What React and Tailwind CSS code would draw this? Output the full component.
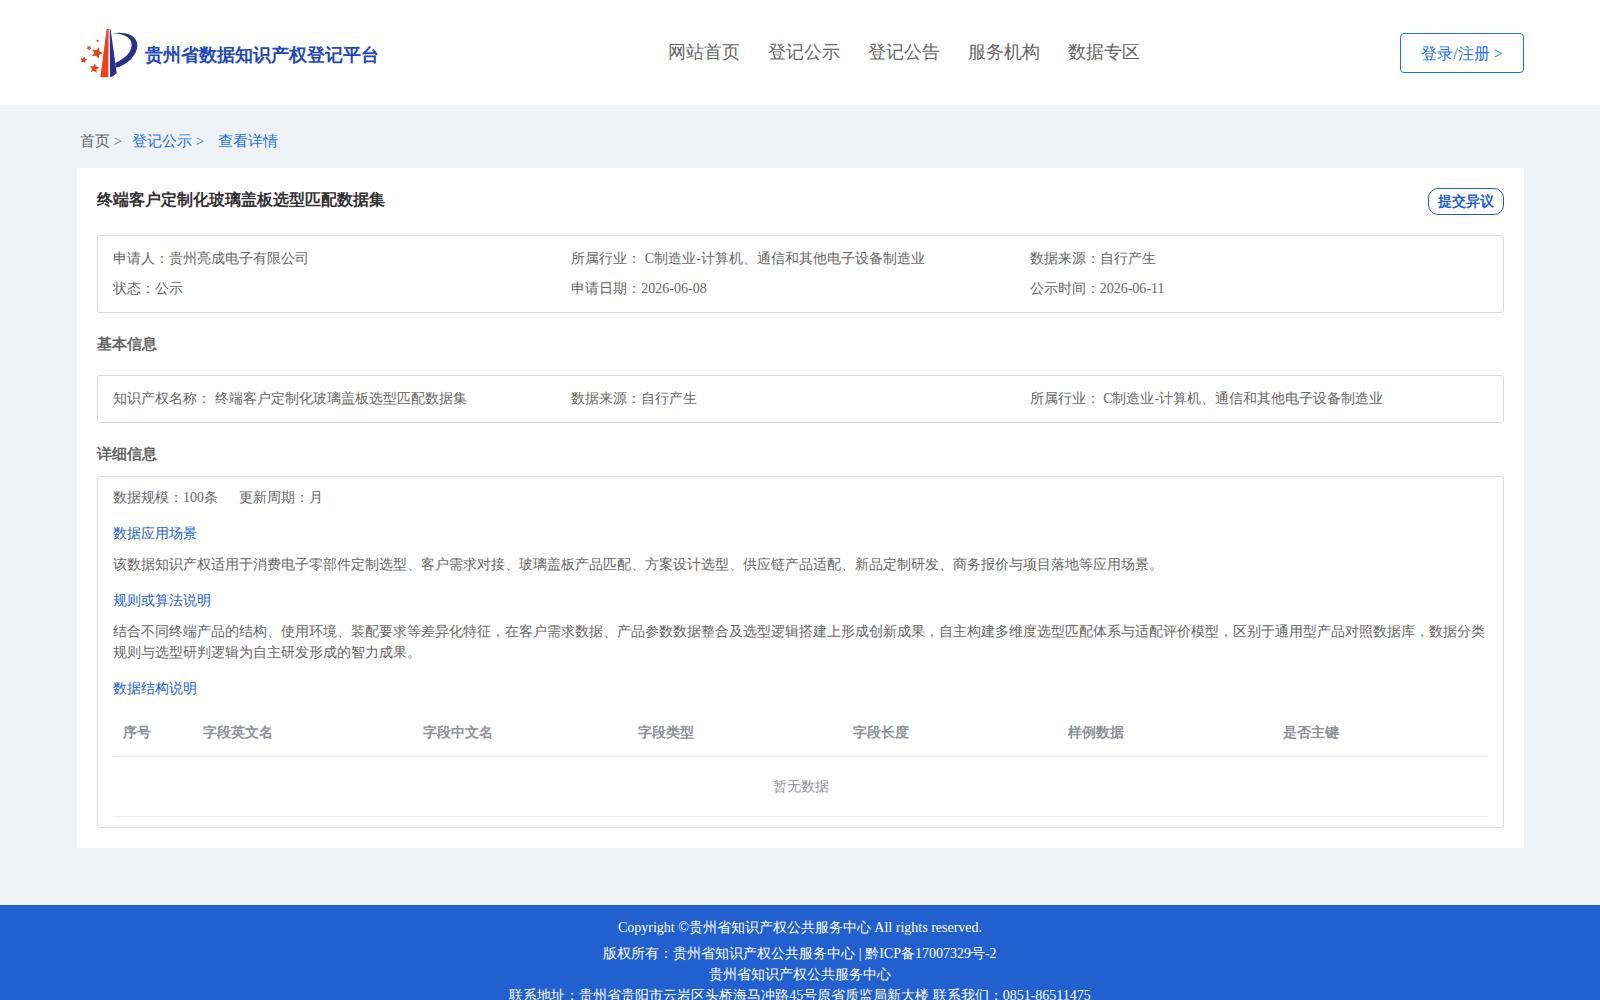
const navItems = [
  { label: "网站首页", href: "#home" },
  { label: "登记公示", href: "#publicity" },
  { label: "登记公告", href: "#notice" },
  { label: "服务机构", href: "#service" },
  { label: "数据专区", href: "#data" }
];

const summary = [
  "申请人：贵州亮成电子有限公司",
  "所属行业： C制造业-计算机、通信和其他电子设备制造业",
  "数据来源：自行产生",
  "状态：公示",
  "申请日期：2026-06-08",
  "公示时间：2026-06-11"
];

const basicInfo = [
  "知识产权名称： 终端客户定制化玻璃盖板选型匹配数据集",
  "数据来源：自行产生",
  "所属行业： C制造业-计算机、通信和其他电子设备制造业"
];

const columns = ["序号", "字段英文名", "字段中文名", "字段类型", "字段长度", "样例数据", "是否主键"];

const stars = [
  { x: 71, y: 149, r: 11, turn: 10 },
  { x: 103, y: 174, r: 15, turn: 8 },
  { x: 111, y: 128, r: 18, turn: 20 },
  { x: 87, y: 113, r: 8, turn: 30 },
  { x: 113, y: 92, r: 5, turn: 0 }
];

const starPoints = ({ x, y, r, turn }) =>
  Array.from({ length: 10 }, (_, i) => {
    const radius = i % 2 ? r * 0.48 : r;
    const angle = ((i * 36 - 90 + turn) * Math.PI) / 180;
    return `${x + radius * Math.cos(angle)},${y + radius * Math.sin(angle)}`;
  }).join(" ");

const Logo = () => (
  <svg viewBox="60 50 180 156" className="h-[52px] w-[60px]" aria-hidden="true">
    <path d="M140 56 L146 56 L145 201 L121 201 Z" fill="#e6461b" />
    <path d="M149 56 L152 58 L170 189 Q161 198 150 201 Z" fill="#2a318c" />
    <path
      d="M156 69 C196 62 230 74 232 103 C233 136 198 166 167 172 L166 158 C190 146 214 130 215 104 C215 80 190 70 156 69 Z"
      fill="#2a318c"
    />
    {stars.map((star) => (
      <polygon key={star.y} points={starPoints(star)} fill="#e6461b" />
    ))}
  </svg>
);

const Header = () => (
  <header className="bg-white">
    <div className="flex h-[105px] items-center justify-between pr-[76px] pl-[77px]">
      <a href="#home" className="flex w-[331px] items-center gap-[5px] pl-[3px]">
        <Logo />
        <span className="pt-1 text-[18px] leading-6 font-bold whitespace-nowrap text-[#2448b8]">
          贵州省数据知识产权登记平台
        </span>
      </a>
      <nav className="flex gap-7 pb-[2px] text-[18px] leading-6 whitespace-nowrap text-[#666]">
        {navItems.map((item) => (
          <a key={item.href} href={item.href}>
            {item.label}
          </a>
        ))}
      </nav>
      <button
        type="button"
        className="h-10 w-[124px] rounded border border-[#1a6ff0] pt-[2px] text-[16px] leading-6 whitespace-nowrap text-[#1a6ff0]"
      >
        登录/注册 &gt;
      </button>
    </div>
  </header>
);

const Breadcrumb = () => (
  <nav className="flex h-[63px] items-center pt-[10px] pl-[3px] text-[15px] leading-[21px] text-[#1a6ff0]">
    <a href="#home" className="mr-[10px] text-[#666]">
      首页 &gt;
    </a>
    <a href="#publicity" className="mr-[14px]">
      登记公示 &gt;
    </a>
    <span>查看详情</span>
  </nav>
);

const InfoGrid = ({ items }) => (
  <ul className="grid grid-cols-3 gap-y-[9px] rounded-[3px] border border-[#dcdcdc] px-[15px] pt-3 pb-[13px]">
    {items.map((item) => (
      <li key={item}>{item}</li>
    ))}
  </ul>
);

const SectionTitle = ({ children }) => (
  <h2 className="text-[15px] leading-[21px] font-bold">{children}</h2>
);

const DetailTitle = ({ children }) => <h3 className="mt-[15px] text-[#2260d0]">{children}</h3>;

const FieldTable = () => (
  <table className="mt-[10px] w-full table-fixed text-left text-[#909399]">
    <colgroup>
      <col className="w-20" />
      <col className="w-[220px]" />
      <col span={5} />
    </colgroup>
    <thead>
      <tr className="h-[47px] border-b border-[#ebeef5]">
        {columns.map((column) => (
          <th key={column} scope="col" className="px-[10px] font-bold">
            {column}
          </th>
        ))}
      </tr>
    </thead>
    <tbody>
      <tr className="h-[60px] border-b border-[#ebeef5]">
        <td colSpan={7} className="text-center">
          暂无数据
        </td>
      </tr>
    </tbody>
  </table>
);

const Footer = () => (
  <footer className="mt-[57px] bg-[#2260d0] px-4 pt-3 pb-5 text-center text-[14px] leading-[21px] text-white">
    <p className="mb-[5px]">Copyright ©贵州省知识产权公共服务中心 All rights reserved.</p>
    <p>版权所有：贵州省知识产权公共服务中心 | 黔ICP备17007329号-2</p>
    <p>贵州省知识产权公共服务中心</p>
    <p>联系地址：贵州省贵阳市云岩区头桥海马冲路45号原省质监局新大楼 联系我们：0851-86511475</p>
  </footer>
);

const App = () => (
  <div className="min-h-screen bg-[#eff3f6] font-['Liberation_Serif',serif]">
    <Header />
    <div className="pr-[76px] pl-[77px]">
      <Breadcrumb />
      <main className="bg-white p-5 text-[14px] leading-[21px] text-[#666]">
        <div className="mb-5 flex items-start justify-between">
          <h1 className="text-[16px] leading-6 font-bold text-[#333]">终端客户定制化玻璃盖板选型匹配数据集</h1>
          <button
            type="button"
            className="h-[27px] w-[76px] rounded-[10px] border border-[#2260d0] font-bold text-[#2260d0]"
          >
            提交异议
          </button>
        </div>
        <InfoGrid items={summary} />
        <div className="mt-[21px] mb-5">
          <SectionTitle>基本信息</SectionTitle>
        </div>
        <InfoGrid items={basicInfo} />
        <div className="mt-[21px] mb-[11px]">
          <SectionTitle>详细信息</SectionTitle>
        </div>
        <section className="rounded-[3px] border border-[#dcdcdc] px-[15px] py-[10px]">
          <p className="flex gap-[21px]">
            <span>数据规模：100条</span>
            <span>更新周期：月</span>
          </p>
          <DetailTitle>数据应用场景</DetailTitle>
          <p className="mt-[10px]">
            该数据知识产权适用于消费电子零部件定制选型、客户需求对接、玻璃盖板产品匹配、方案设计选型、供应链产品适配、新品定制研发、商务报价与项目落地等应用场景。
          </p>
          <DetailTitle>规则或算法说明</DetailTitle>
          <p className="mt-[10px]">
            结合不同终端产品的结构、使用环境、装配要求等差异化特征，在客户需求数据、产品参数数据整合及选型逻辑搭建上形成创新成果，自主构建多维度选型匹配体系与适配评价模型，区别于通用型产品对照数据库，数据分类规则与选型研判逻辑为自主研发形成的智力成果。
          </p>
          <DetailTitle>数据结构说明</DetailTitle>
          <FieldTable />
        </section>
      </main>
    </div>
    <Footer />
  </div>
);

export default App;
